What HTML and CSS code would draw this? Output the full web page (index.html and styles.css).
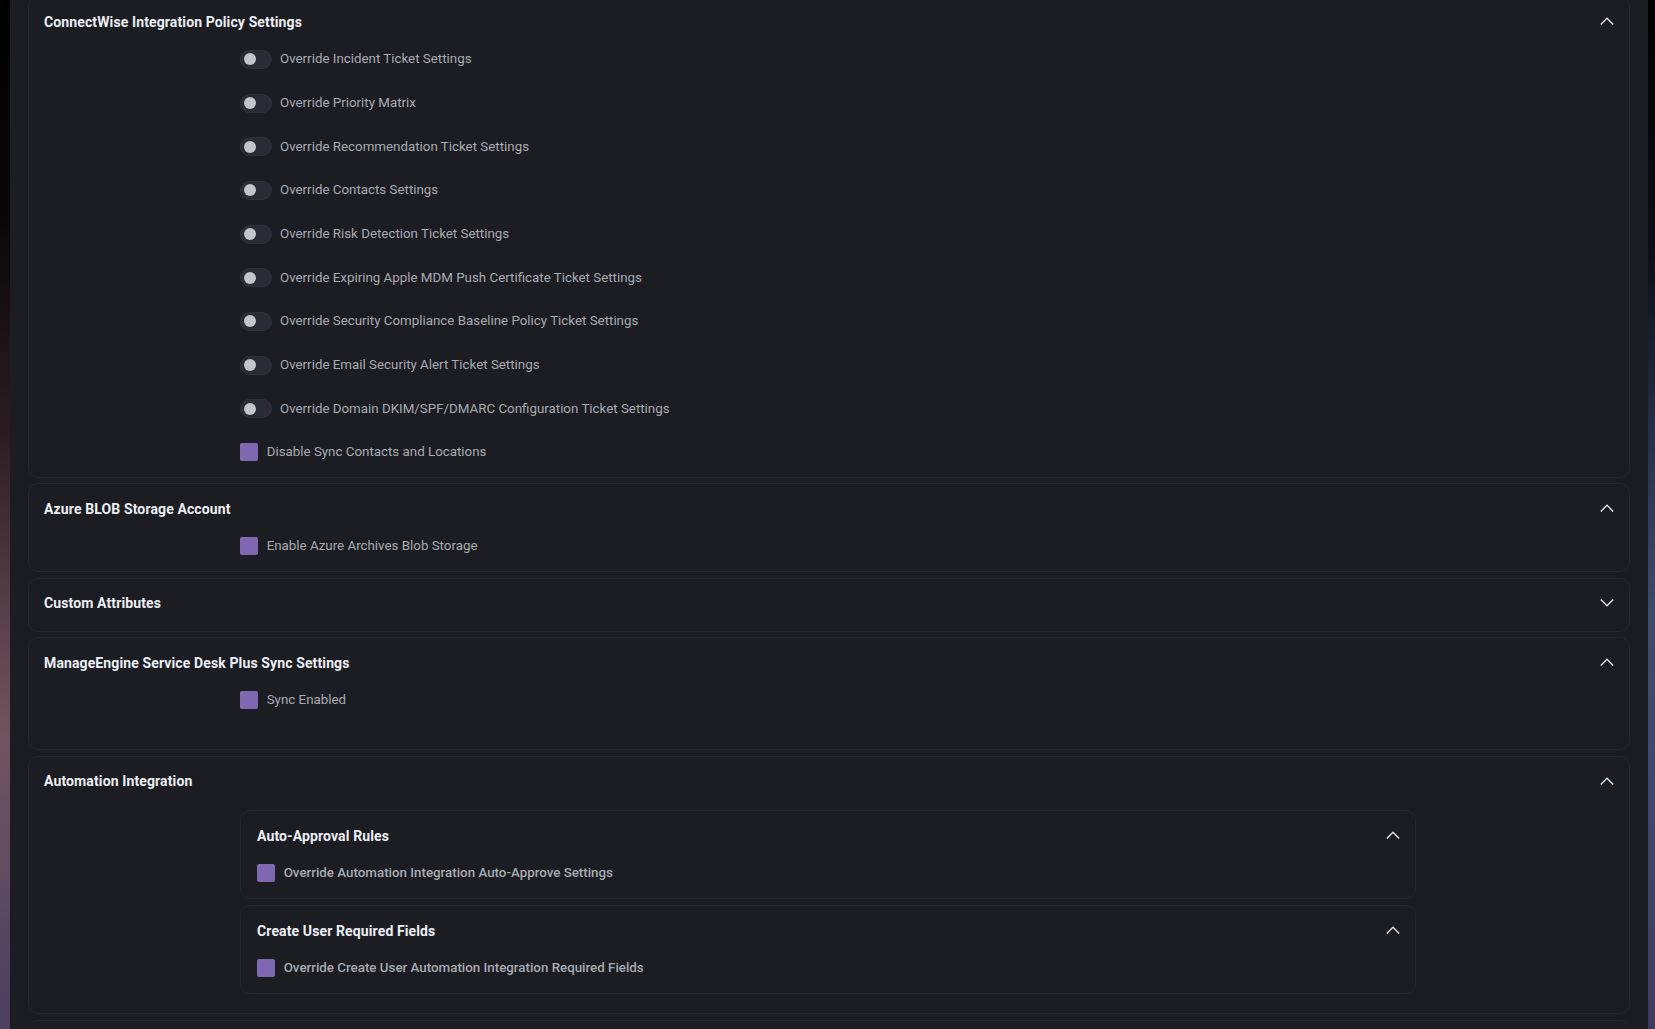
FILE: index.html
```html
<!DOCTYPE html>
<html lang="en">
<head>
<meta charset="utf-8">
<title>Policy Settings</title>
<link rel="stylesheet" href="styles.css">
</head>
<body>
<div class="edge edge-left"></div>
<main class="panel">
  <div class="stack">
    <section class="card">
      <div class="card-head">
        <span class="card-title">ConnectWise Integration Policy Settings</span>
        <svg class="chev" viewBox="0 0 14 8" width="14" height="8"><polyline points="0.8,7.4 7,1.2 13.2,7.4"/></svg>
      </div>
      <div class="card-body indent rows">
        <div class="row"><span class="toggle"><span class="knob"></span></span><span class="label">Override Incident Ticket Settings</span></div>
        <div class="row"><span class="toggle"><span class="knob"></span></span><span class="label">Override Priority Matrix</span></div>
        <div class="row"><span class="toggle"><span class="knob"></span></span><span class="label">Override Recommendation Ticket Settings</span></div>
        <div class="row"><span class="toggle"><span class="knob"></span></span><span class="label">Override Contacts Settings</span></div>
        <div class="row"><span class="toggle"><span class="knob"></span></span><span class="label">Override Risk Detection Ticket Settings</span></div>
        <div class="row"><span class="toggle"><span class="knob"></span></span><span class="label">Override Expiring Apple MDM Push Certificate Ticket Settings</span></div>
        <div class="row"><span class="toggle"><span class="knob"></span></span><span class="label">Override Security Compliance Baseline Policy Ticket Settings</span></div>
        <div class="row"><span class="toggle"><span class="knob"></span></span><span class="label">Override Email Security Alert Ticket Settings</span></div>
        <div class="row"><span class="toggle"><span class="knob"></span></span><span class="label">Override Domain DKIM/SPF/DMARC Configuration Ticket Settings</span></div>
        <div class="row row-after-toggles"><span class="check"></span><span class="label">Disable Sync Contacts and Locations</span></div>
      </div>
    </section>

    <section class="card">
      <div class="card-head">
        <span class="card-title">Azure BLOB Storage Account</span>
        <svg class="chev" viewBox="0 0 14 8" width="14" height="8"><polyline points="0.8,7.4 7,1.2 13.2,7.4"/></svg>
      </div>
      <div class="card-body indent rows">
        <div class="row"><span class="check"></span><span class="label">Enable Azure Archives Blob Storage</span></div>
      </div>
    </section>

    <section class="card">
      <div class="card-head">
        <span class="card-title">Custom Attributes</span>
        <svg class="chev" viewBox="0 0 14 8" width="14" height="8"><polyline points="0.8,0.6 7,6.8 13.2,0.6"/></svg>
      </div>
    </section>

    <section class="card">
      <div class="card-head">
        <span class="card-title">ManageEngine Service Desk Plus Sync Settings</span>
        <svg class="chev" viewBox="0 0 14 8" width="14" height="8"><polyline points="0.8,7.4 7,1.2 13.2,7.4"/></svg>
      </div>
      <div class="card-body indent rows">
        <div class="row"><span class="check"></span><span class="label">Sync Enabled</span></div>
        <div class="spacer"></div>
      </div>
    </section>

    <section class="card">
      <div class="card-head">
        <span class="card-title">Automation Integration</span>
        <svg class="chev" viewBox="0 0 14 8" width="14" height="8"><polyline points="0.8,7.4 7,1.2 13.2,7.4"/></svg>
      </div>
      <div class="card-body indent nested-wrap">
        <section class="card nested">
          <div class="card-head">
            <span class="card-title">Auto-Approval Rules</span>
            <svg class="chev" viewBox="0 0 14 8" width="14" height="8"><polyline points="0.8,7.4 7,1.2 13.2,7.4"/></svg>
          </div>
          <div class="card-body rows">
            <div class="row"><span class="check"></span><span class="label label-strong">Override Automation Integration Auto-Approve Settings</span></div>
          </div>
        </section>
        <section class="card nested">
          <div class="card-head">
            <span class="card-title">Create User Required Fields</span>
            <svg class="chev" viewBox="0 0 14 8" width="14" height="8"><polyline points="0.8,7.4 7,1.2 13.2,7.4"/></svg>
          </div>
          <div class="card-body rows">
            <div class="row"><span class="check"></span><span class="label label-strong">Override Create User Automation Integration Required Fields</span></div>
          </div>
        </section>
      </div>
    </section>

    <section class="card">
      <div class="card-head">
        <span class="card-title"></span>
      </div>
    </section>
  </div>
</main>
<div class="edge edge-right"></div>
</body>
</html>
```

FILE: styles.css
```css
html, body {
  margin: 0;
  padding: 0;
  height: 100%;
}

body {
  display: flex;
  overflow: hidden;
  background: #1c1d22;
  font-family: Roboto, "Liberation Sans", Arial, sans-serif;
}

.edge {
  flex: none;
  height: 100%;
}

.edge-left {
  width: 10px;
  background: linear-gradient(to bottom, #000000 0%, #0b0709 22%, #2c1c22 42%, #5e4450 62%, #715460 72%, #5e4a62 86%, #4a3d5e 100%);
}

.edge-right {
  width: 7px;
  background: linear-gradient(to bottom, #000000 0%, #0c0f18 25%, #2a3550 45%, #3d4b6c 60%, #404870 75%, #3e3a5e 100%);
}

.panel {
  flex: 1;
  min-width: 0;
  background: #1c1d22;
  padding: 0 18px;
  overflow: hidden;
}

.stack {
  margin-top: -3.7px;
}

.card {
  border: 1px solid #26272d;
  border-radius: 10px;
  background: #1c1d22;
  padding: 13px 15px 15px;
  margin-bottom: 5.6px;
}

.card-head {
  height: 24px;
  display: flex;
  align-items: center;
  justify-content: space-between;
}

.card-title {
  font-size: 14px;
  font-weight: 700;
  color: #eceff5;
  line-height: 20px;
  margin-top: -1px;
  letter-spacing: 0.12px;
}

.chev {
  flex: none;
  fill: none;
  stroke: #d8e0ef;
  stroke-width: 1.4;
  margin-top: -2px;
}

.card-body {
  margin-top: 15px;
}

.indent {
  padding-left: 196px;
}

.rows {
  display: flex;
  flex-direction: column;
  gap: 23.7px;
}

.row {
  height: 20px;
  display: flex;
  align-items: center;
}

.row-after-toggles {
  margin-top: -0.8px;
}

.toggle {
  flex: none;
  position: relative;
  width: 30px;
  height: 17px;
  border: 1px solid #30313b;
  border-radius: 10px;
  background: #2a2b35;
  margin-right: 8px;
}

.knob {
  position: absolute;
  left: 3px;
  top: 2.5px;
  width: 12px;
  height: 12px;
  border-radius: 50%;
  background: #c3c5cb;
}

.check {
  flex: none;
  width: 18px;
  height: 18px;
  border-radius: 2px;
  background: #7f68b1;
  margin-right: 8.7px;
}

.label {
  font-size: 13.33px;
  color: #a8abb2;
  line-height: 20px;
  white-space: nowrap;
}

.label-strong {
  font-weight: 500;
}

.spacer {
  height: 0;
}

.nested-wrap {
  margin-top: 16.7px;
}

.nested {
  box-sizing: border-box;
  max-width: 1176px;
  padding-left: 16px;
}

.nested:last-child {
  margin-bottom: 4.3px;
}
```
